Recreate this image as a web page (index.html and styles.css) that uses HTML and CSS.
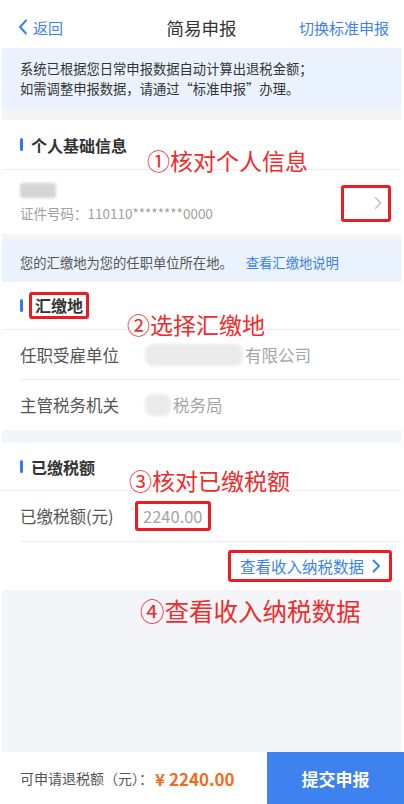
FILE: index.html
```html
<!DOCTYPE html>
<html lang="zh-CN">
<head>
<meta charset="utf-8">
<title>简易申报</title>
<link rel="stylesheet" href="styles.css">
</head>
<body>
<div class="page">
  <header class="nav">
    <a class="nav-back">
      <svg width="10" height="16" viewBox="0 0 10 16"><path d="M8 1.5 L2 8 L8 14.5" fill="none" stroke="#3b7ff0" stroke-width="2" stroke-linecap="round" stroke-linejoin="round"/></svg>
      <span>返回</span>
    </a>
    <div class="nav-title">简易申报</div>
    <a class="nav-right">切换标准申报</a>
  </header>

  <div class="notice notice-top">
    <p>系统已根据您日常申报数据自动计算出退税金额；</p>
    <p>如需调整申报数据，请通过“标准申报”办理。</p>
  </div>

  <div class="gap gap-12"></div>

  <section class="card card-person">
    <div class="sec-head"><i class="bar"></i><span>个人基础信息</span></div>
    <div class="person-row">
      <div class="person-info">
        <div class="blur-name"></div>
        <div class="id-text">证件号码：110110********0000</div>
      </div>
      <div class="mark-box chevron-box">
        <svg width="8" height="14" viewBox="0 0 8 14"><path d="M1.5 1.5 L6.5 7 L1.5 12.5" fill="none" stroke="#c4c4c4" stroke-width="1.5" stroke-linecap="round" stroke-linejoin="round"/></svg>
      </div>
    </div>
    <div class="annot annot-1">①核对个人信息</div>
  </section>

  <div class="gap gap-5"></div>

  <div class="notice notice-place">
    <span>您的汇缴地为您的任职单位所在地。</span><a class="link">查看汇缴地说明</a>
  </div>

  <section class="card card-place">
    <div class="sec-head"><i class="bar"></i><span class="mark-box title-box">汇缴地</span></div>
    <div class="row row-indent">
      <span class="label">任职受雇单位</span>
      <span class="value"><i class="blur blur-wide"></i>有限公司</span>
    </div>
    <div class="row">
      <span class="label">主管税务机关</span>
      <span class="value"><i class="blur blur-small"></i>税务局</span>
    </div>
    <div class="annot annot-2">②选择汇缴地</div>
  </section>

  <div class="gap gap-13"></div>

  <section class="card card-tax">
    <div class="sec-head"><i class="bar"></i><span>已缴税额</span></div>
    <div class="row row-indent">
      <span class="label">已缴税额(元)</span>
      <span class="mark-box amount-box">2240.00</span>
    </div>
    <div class="link-row">
      <a class="mark-box link-box">查看收入纳税数据
        <svg width="9" height="14" viewBox="0 0 9 14"><path d="M1.5 1.5 L7 7 L1.5 12.5" fill="none" stroke="#3b7ff0" stroke-width="1.8" stroke-linecap="round" stroke-linejoin="round"/></svg>
      </a>
    </div>
    <div class="annot annot-3">③核对已缴税额</div>
  </section>

  <div class="filler">
    <div class="annot annot-4">④查看收入纳税数据</div>
  </div>

  <footer class="bottom">
    <div class="refund">可申请退税额（元）：<strong>¥ 2240.00</strong></div>
    <a class="submit">提交申报</a>
  </footer>
</div>
</body>
</html>
```

FILE: styles.css
```css
* { box-sizing: border-box; }
html, body { margin: 0; padding: 0; background: #fff; }
body {
  font-family: "Noto Sans CJK SC", "Noto Sans", sans-serif;
  color: #333;
}
p { margin: 0; }
a { text-decoration: none; }

.page {
  margin: 0 3px 0 2px;
  height: 804px;
  display: flex;
  flex-direction: column;
  background: #fff;
}

/* nav */
.nav {
  height: 48px;
  padding: 6px 12px 0 16px;
  display: flex;
  align-items: center;
  justify-content: space-between;
  position: relative;
}
.nav-back {
  display: flex;
  align-items: center;
  gap: 5px;
  color: #3b7ff0;
  font-size: 15px;
}
.nav-title {
  position: absolute;
  left: 0; right: 0;
  top: 6px; bottom: 0;
  display: flex;
  align-items: center;
  justify-content: center;
  font-size: 17.5px;
  color: #333;
  pointer-events: none;
}
.nav-right {
  color: #3b7ff0;
  font-size: 15px;
}

/* notices */
.notice {
  background: #eaf3fd;
  font-size: 13.3px;
  color: #333;
  padding-left: 18px;
}
.notice-top {
  height: 60px;
  padding-top: 11px;
  line-height: 19.5px;
}
.notice-place {
  height: 43px;
  display: flex;
  align-items: center;
  padding-top: 3px;
  font-size: 13.3px;
  color: #555;
}
.link { color: #3b7ff0; margin-left: 13px; }

.gap { background: #f4f5f8; }
.gap-12 { height: 12px; }
.gap-5 { height: 5px; }
.gap-13 { height: 13px; }

/* cards */
.card { position: relative; background: #fff; }
.sec-head {
  height: 50px;
  display: flex;
  align-items: center;
  padding-left: 18px;
  gap: 8px;
  font-size: 16px;
  font-weight: 700;
  color: #333;
  border-bottom: 1px solid #ededed;
}
.bar {
  display: block;
  width: 3px;
  height: 13px;
  border-radius: 2px;
  background: #3478f6;
}
.card-place .sec-head { height: 48px; gap: 6px; }
.card-tax .sec-head { height: 48px; }

.person-row {
  height: 64px;
  display: flex;
  align-items: center;
  justify-content: space-between;
  padding: 0 10px 0 18px;
}
.person-info { display: flex; flex-direction: column; gap: 5px; padding-top: 2px; }
.blur-name {
  width: 36px;
  height: 15px;
  border-radius: 3px;
  background: #d5d5d5;
  filter: blur(1.5px);
}
.id-text { font-size: 13.5px; color: #a0a0a0; }

.mark-box {
  border: 3px solid #ec1c24;
  border-radius: 3px;
}
.chevron-box {
  width: 50px;
  height: 37px;
  margin-top: 2px;
  display: flex;
  align-items: center;
  justify-content: flex-end;
  padding-right: 6px;
}

.row {
  height: 50px;
  display: flex;
  align-items: center;
  padding-left: 18px;
  font-size: 16.5px;
}
.row-indent { border-bottom: 1px solid #ededed; margin-left: 18px; padding-left: 0; }
.label { color: #555; width: 125px; flex: none; }
.value { color: #a5a5a5; display: flex; align-items: center; }
.blur {
  display: inline-block;
  height: 22px;
  border-radius: 8px;
  background: #ebebeb;
  filter: blur(1.5px);
}
.blur-wide { width: 98px; margin-right: 2px; }
.blur-small { width: 26px; margin-right: 2px; }

.title-box {
  padding: 0 3px;
  line-height: 21px;
  font-weight: 700;
}

.amount-box {
  color: #a5a5a5;
  padding: 1px 5px;
  line-height: 22px;
  margin-left: -10px;
}
.card-tax .row { height: 51px; }

.link-row {
  height: 48px;
  display: flex;
  align-items: center;
  justify-content: flex-end;
  padding-right: 9px;
}
.link-box {
  color: #3b7ff0;
  font-size: 15.5px;
  display: flex;
  align-items: center;
  gap: 8px;
  height: 32px;
  padding: 0 8px 0 9px;
}

.filler {
  flex: 1;
  background: #f4f5f8;
  position: relative;
}

/* annotations */
.annot {
  position: absolute;
  color: #ef2b2b;
  font-size: 23px;
  line-height: 24px;
  white-space: nowrap;
}
.annot-1 { left: 145px; top: 28px; }
.annot-2 { left: 125px; top: 30px; }
.annot-3 { left: 127px; top: 25px; }
.annot-4 { left: 138px; top: 7px; font-size: 24.5px; line-height: 28px; }

/* bottom */
.bottom {
  height: 52px;
  display: flex;
  align-items: stretch;
  margin-right: -3px;
}
.refund {
  flex: 1;
  display: flex;
  align-items: center;
  padding-left: 18px;
  font-size: 14px;
  color: #555;
}
.refund strong {
  color: #f36b1c;
  font-size: 17px;
  font-weight: 700;
  margin-left: 2px;
}
.submit {
  width: 137px;
  background: #3d82ee;
  color: #fff;
  font-size: 17px;
  font-weight: 700;
  display: flex;
  align-items: center;
  justify-content: center;
}
```
